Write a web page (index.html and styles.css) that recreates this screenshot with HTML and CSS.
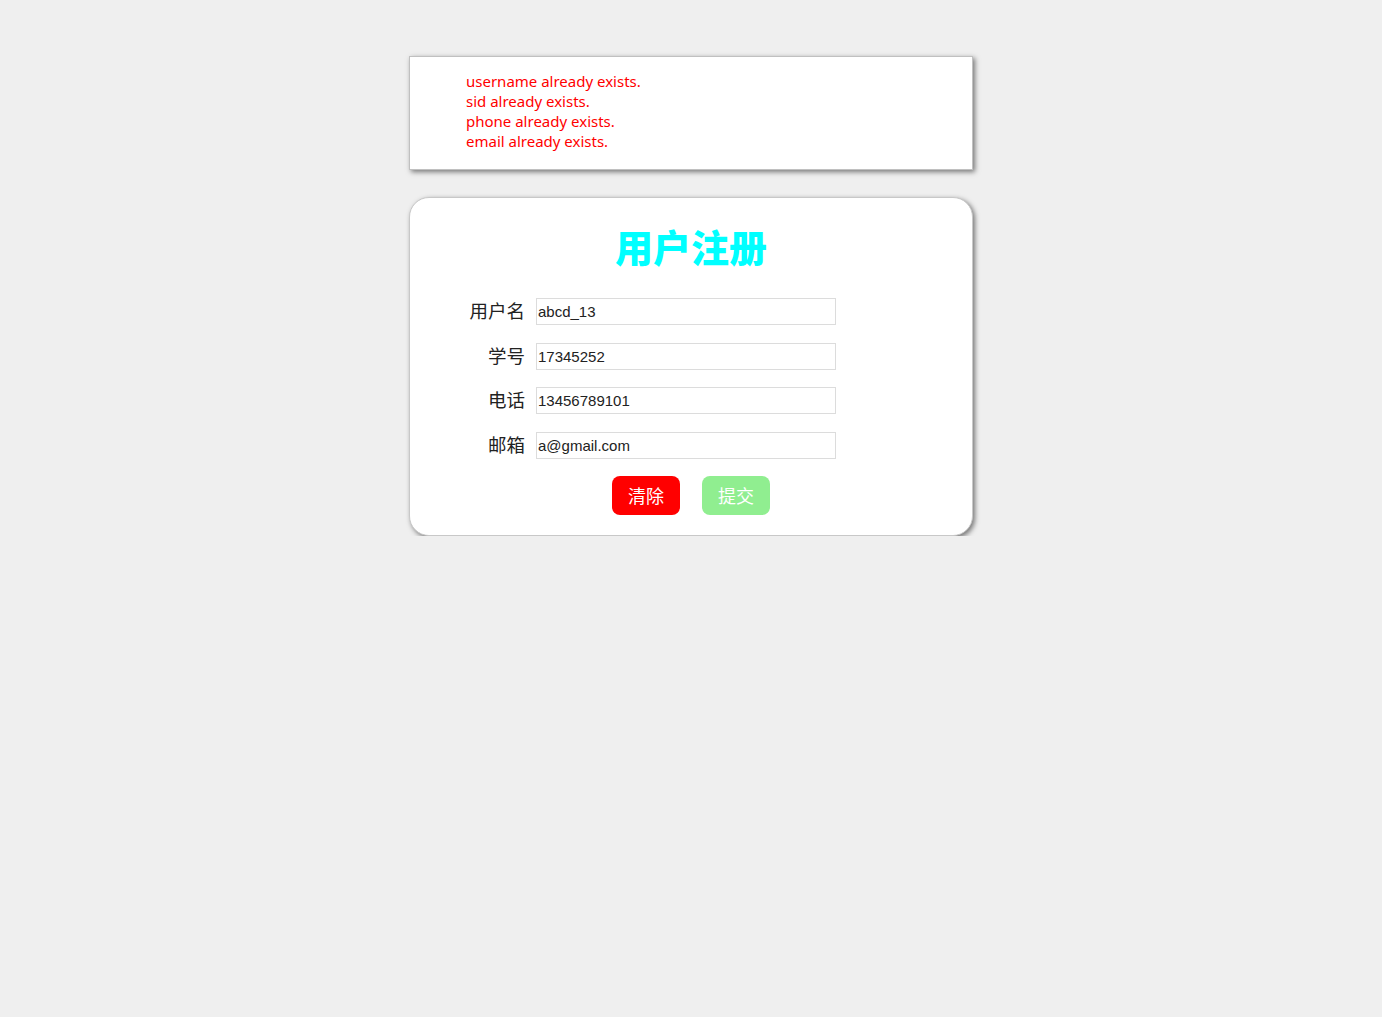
FILE: index.html
```html
<!DOCTYPE html>
<html lang="zh">
<head>
<meta charset="utf-8">
<title>用户注册</title>
<link rel="stylesheet" href="styles.css">
</head>
<body>
<div class="page">
  <div class="errors">
    <ul class="error-list">
      <li>username already exists.</li>
      <li>sid already exists.</li>
      <li>phone already exists.</li>
      <li>email already exists.</li>
    </ul>
  </div>
  <form class="card">
    <h1 class="title">用户注册</h1>
    <div class="row"><label class="label">用户名</label><input class="field" type="text" value="abcd_13"></div>
    <div class="row"><label class="label">学号</label><input class="field" type="text" value="17345252"></div>
    <div class="row"><label class="label">电话</label><input class="field" type="text" value="13456789101"></div>
    <div class="row"><label class="label">邮箱</label><input class="field" type="text" value="a@gmail.com"></div>
    <div class="actions">
      <button type="button" class="btn btn-clear">清除</button>
      <button type="button" class="btn btn-submit">提交</button>
    </div>
  </form>
</div>
</body>
</html>
```
FILE: styles.css
```css
html, body {
  margin: 0;
  padding: 0;
  background: #efefef;
}
body {
  font-family: "Noto Sans", "Noto Sans CJK SC", sans-serif;
}
.page {
  width: 564px;
  margin: 0 auto;
  padding-top: 56px;
  display: flex;
  flex-direction: column;
  gap: 27px;
}
.errors {
  background: #fff;
  border: 1px solid #c0c0c0;
  box-shadow: 2px 2px 5px #777;
  height: 112px;
  box-sizing: content-box;
}
.error-list {
  list-style: none;
  margin: 0;
  padding: 14px 0 0 56px;
  color: #ff0000;
  font-size: 15px;
  line-height: 20px;
}
.card {
  background: #fff;
  border: 1px solid #c8c8c8;
  border-radius: 20px;
  box-shadow: 2px 2px 5px #777;
  padding: 25px 0 20px;
  display: flex;
  flex-direction: column;
  align-items: center;
}
.title {
  margin: 0 0 29px;
  font-family: "Noto Sans CJK SC", sans-serif;
  font-weight: 900;
  font-size: 38px;
  line-height: 46px;
  color: #00ffff;
}
.row {
  display: flex;
  align-items: center;
  width: 562px;
  margin-bottom: 17.67px;
}
.label {
  width: 115px;
  text-align: right;
  font-family: "Noto Sans CJK SC", sans-serif;
  font-size: 18.5px;
  line-height: 24px;
  color: #222;
  padding: 0 11px 3px 0;
  box-sizing: content-box;
}
.field {
  width: 300px;
  height: 27px;
  box-sizing: border-box;
  border: 1px solid #dcdcdc;
  padding: 0 1px;
  font-family: "Liberation Sans", Arial, sans-serif;
  font-size: 15px;
  color: #222;
  outline: none;
}
.actions {
  display: flex;
  gap: 22px;
  margin-top: -1px;
}
.btn {
  width: 68px;
  height: 39px;
  border: none;
  border-radius: 8px;
  color: #fff;
  font-family: "Noto Sans CJK SC", sans-serif;
  font-size: 18px;
  padding: 0;
}
.btn-clear {
  background: #ff0000;
}
.btn-submit {
  background: #90ee90;
}
```
